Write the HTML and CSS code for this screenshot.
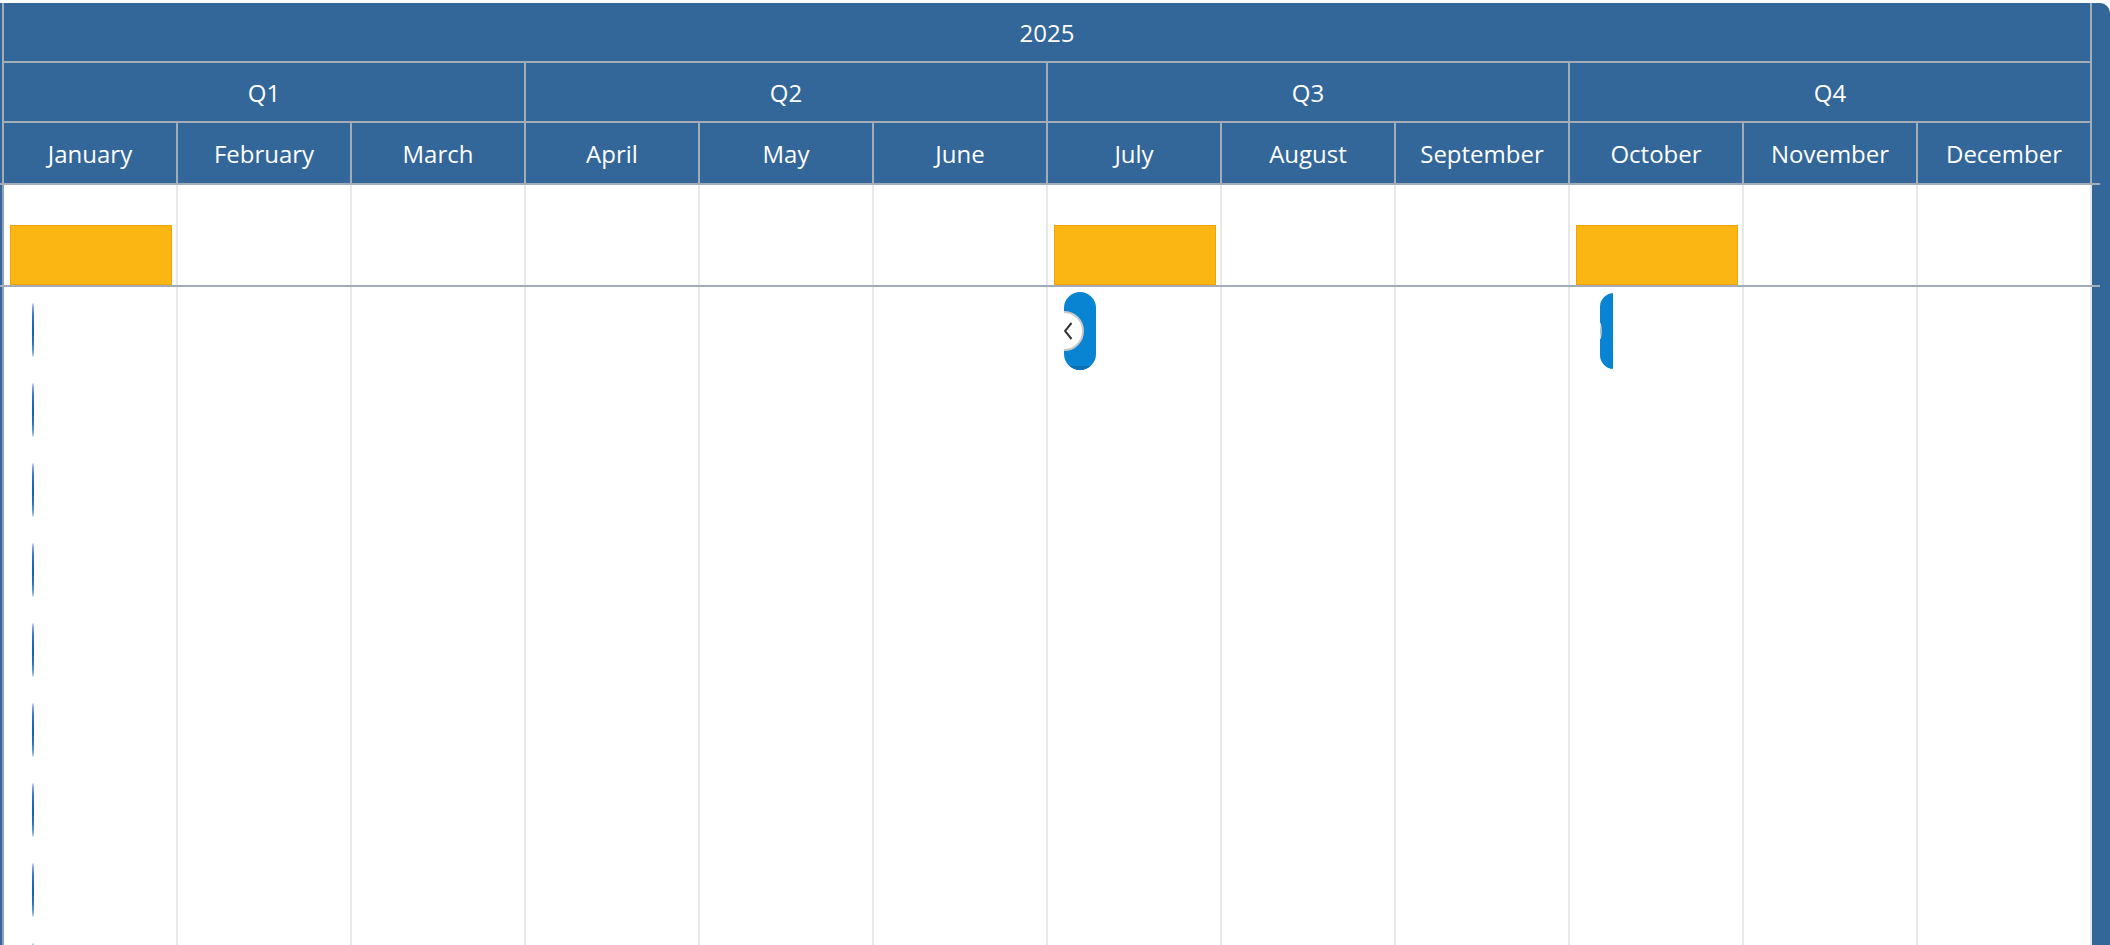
FILE: index.html
```html
<!DOCTYPE html>
<html>
<head>
<meta charset="utf-8">
<link rel="stylesheet" href="styles.css">
</head>
<body>
<div class="gantt">
  <div class="chart">
    <div class="hdr">
      <div class="yr">2025</div>
      <div class="qrow">
        <div class="q">Q1</div><div class="q">Q2</div><div class="q">Q3</div><div class="q">Q4</div>
      </div>
      <div class="mrow">
        <div class="m">January</div><div class="m">February</div><div class="m">March</div>
        <div class="m">April</div><div class="m">May</div><div class="m">June</div>
        <div class="m">July</div><div class="m">August</div><div class="m">September</div>
        <div class="m">October</div><div class="m">November</div><div class="m">December</div>
      </div>
    </div>
    <div class="rule"></div>
    <div class="row r1">
      <div class="cell"><div class="bar"></div></div>
      <div class="cell"></div><div class="cell"></div><div class="cell"></div><div class="cell"></div><div class="cell"></div>
      <div class="cell"><div class="bar"></div></div>
      <div class="cell"></div><div class="cell"></div>
      <div class="cell"><div class="bar"></div></div>
      <div class="cell"></div><div class="cell"></div>
    </div>
    <div class="rule"></div>
    <div class="row r2">
      <div class="cell">
        <div class="dashes">
          <span class="dash"></span><span class="dash"></span><span class="dash"></span>
          <span class="dash"></span><span class="dash"></span><span class="dash"></span>
          <span class="dash"></span><span class="dash"></span><span class="dash"></span>
        </div>
      </div>
      <div class="cell"></div><div class="cell"></div><div class="cell"></div><div class="cell"></div><div class="cell"></div>
      <div class="cell">
        <svg class="pill" width="32" height="78" viewBox="0 0 32 78">
          <defs><clipPath id="pc"><rect x="0" y="0" width="32" height="78" rx="16" ry="16"/></clipPath></defs>
          <g clip-path="url(#pc)">
            <rect x="0" y="0" width="32" height="78" fill="#0884d2"/>
            <rect x="0" y="74" width="32" height="4" fill="#0a6fb3"/>
            <circle cx="0" cy="39" r="19" fill="#ffffff" stroke="#c9c9c9" stroke-width="2"/>
            <path d="M7.5 31 L1 39 L7.5 47" fill="none" stroke="#333333" stroke-width="2"/>
          </g>
        </svg>
      </div>
      <div class="cell"></div><div class="cell"></div>
      <div class="cell">
        <svg class="pill2" width="13" height="76" viewBox="0 0 13 76">
          <rect x="0" y="0" width="32" height="76" rx="14" ry="14" fill="#0884d2"/>
          <path d="M0 30 Q2 38 0 46" fill="none" stroke="#d8d8d8" stroke-width="1.5"/>
        </svg>
      </div>
      <div class="cell"></div><div class="cell"></div>
    </div>
  </div>
</div>
</body>
</html>
```
FILE: styles.css
```css
* { box-sizing: border-box; }
html, body { margin: 0; padding: 0; background: #ffffff; overflow: hidden; }
body { font-family: "Open Sans", "Noto Sans", sans-serif; }

.gantt {
  margin-top: 3px;
  height: 942px;
  background: #336699;
  border-top-right-radius: 10px;
  overflow: hidden;
  padding-left: 2px;
}
.chart {
  width: 2090px;
  height: 100%;
  display: flex;
  flex-direction: column;
}
.hdr {
  border-left: 2px solid #a3adb8;
  color: #ffffff;
  font-size: 24px;
}
.yr {
  height: 60px;
  display: flex;
  align-items: center;
  justify-content: center;
  border-bottom: 2px solid #a3adb8;
  border-right: 2px solid #a3adb8;
}
.qrow {
  display: flex;
  height: 60px;
  border-bottom: 2px solid #a3adb8;
}
.q {
  width: 522px;
  display: flex;
  align-items: center;
  justify-content: center;
  border-right: 2px solid #a3adb8;
}
.mrow {
  display: flex;
  height: 60px;
}
.m {
  width: 174px;
  display: flex;
  align-items: center;
  justify-content: center;
  border-right: 2px solid #a3adb8;
}
.rule {
  height: 2px;
  width: 2100px;
  margin-left: -2px;
  background: #a3adb8;
  flex: none;
}
.row {
  display: flex;
  border-left: 2px solid #8fa3b8;
}
.r1 { height: 100px; flex: none; }
.r2 { flex: 1; }
.cell {
  width: 174px;
  background: #ffffff;
  border-right: 2px solid #e8e8e8;
}
.bar {
  margin: 40px 0 0 6px;
  width: 162px;
  height: 60px;
  background: #fbb614;
  border: 1px solid #eea408;
}
.dashes {
  display: flex;
  flex-direction: column;
  gap: 26px;
  padding: 16px 0 0 28px;
}
.dash {
  display: block;
  width: 2px;
  height: 54px;
  background: #1565b6;
  border-radius: 50%;
}
.pill {
  display: block;
  margin: 5px 0 0 16px;
}
.pill2 {
  display: block;
  margin: 6px 0 0 30px;
}
```
